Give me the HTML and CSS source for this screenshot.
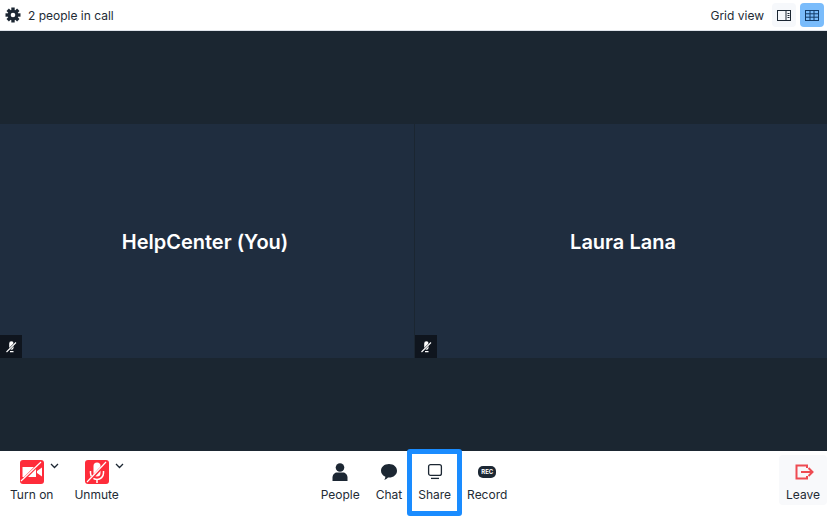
FILE: index.html
```html
<!DOCTYPE html>
<html lang="en">
<head>
  <meta charset="UTF-8">
  <title>Meeting</title>
  <link rel="stylesheet" href="styles.css">
</head>
<body>
<div class="app">
  <header class="topbar">
    <div class="call-info">
      <svg class="gear" width="16" height="16" viewBox="0 0 16 16" fill="#1c2733">
        <rect x="6.300" y=".5" width="3.400" height="15"/>
        <rect x="6.300" y=".5" width="3.400" height="15" transform="rotate(45 8 8)"/>
        <rect x="6.300" y=".5" width="3.400" height="15" transform="rotate(90 8 8)"/>
        <rect x="6.300" y=".5" width="3.400" height="15" transform="rotate(135 8 8)"/>
        <circle cx="8" cy="8" r="5.300"/>
        <circle cx="8" cy="8" r="2.300" fill="#fff"/>
      </svg>
      <span>2 people in call</span>
    </div>
    <div class="view-switch">
      <span class="view-label">Grid view</span>
      <button class="view-btn">
        <svg width="14" height="11" viewBox="0 0 14 11" fill="none" stroke="#1c2733"><rect x=".5" y=".5" width="13" height="10"/><path d="M9 .5v10M10.500 3.500h2M10.500 5.500h2M10.500 7.500h2"/></svg>
      </button>
      <button class="view-btn active">
        <svg width="14" height="11" viewBox="0 0 14 11" fill="none" stroke="#123a66"><rect x=".5" y=".5" width="13" height="10"/><path d="M.5 3.800h13M.5 7.200h13M5 .5v10M9 .5v10"/></svg>
      </button>
    </div>
  </header>

  <main class="stage">
    <div class="grid">
      <section class="tile tile-self">
        <div class="tile-name">HelpCenter (You)</div>
        <div class="muted-badge">
          <svg width="14" height="14" viewBox="0 0 14 14"><path fill="#fff" d="M5.200 3.500a2.200 2.200 0 0 1 4.400 0v4a2.200 2.200 0 0 1-4.400 0zM6 11h3.500v1.200H6z"/><path stroke="#0f151e" stroke-width="2.200" d="M3 11.500L11.500 3"/><path stroke="#fff" stroke-width="1.100" d="M2.500 12L12 2.500"/></svg>
        </div>
      </section>
      <section class="tile tile-other">
        <div class="tile-name">Laura Lana</div>
        <div class="muted-badge">
          <svg width="14" height="14" viewBox="0 0 14 14"><path fill="#fff" d="M5.200 3.500a2.200 2.200 0 0 1 4.400 0v4a2.200 2.200 0 0 1-4.400 0zM6 11h3.500v1.200H6z"/><path stroke="#0f151e" stroke-width="2.200" d="M3 11.500L11.500 3"/><path stroke="#fff" stroke-width="1.100" d="M2.500 12L12 2.500"/></svg>
        </div>
      </section>
    </div>
  </main>

  <footer class="toolbar">
    <div class="tool-group left">
      <div class="tool tool-media">
        <div class="tool-icon">
          <span class="red-box">
            <svg width="24" height="24" viewBox="0 0 24 24"><path fill="#fff" d="M2.500 7h13.500v10H2.500zM17 11l5-3.500v9L17 13z"/><path stroke="#fe2c3a" stroke-width="3" d="M2 21L20 3"/><path stroke="#fff" stroke-width="1.200" d="M1 21L21 2"/></svg>
          </span>
          <svg class="caret" width="9" height="6" viewBox="0 0 9 6" fill="none" stroke="#1c2733" stroke-width="1.300"><path d="M1 1l3.500 3.500L8 1"/></svg>
        </div>
        <span class="tool-label">Turn on</span>
      </div>
      <div class="tool tool-media tool-unmute">
        <div class="tool-icon">
          <span class="red-box">
            <svg width="24" height="24" viewBox="0 0 24 24"><path fill="#fff" d="M8.500 6a3.500 3.500 0 0 1 7 0v7a3.500 3.500 0 0 1-7 0z"/><path fill="none" stroke="#fff" stroke-width="1.500" d="M5.500 11v2a6.500 6.500 0 0 0 13 0v-2M12 19.500V23"/><path stroke="#fe2c3a" stroke-width="3" d="M3 22L21 3"/><path stroke="#fff" stroke-width="1.200" d="M2 22L21 2"/></svg>
          </span>
          <svg class="caret" width="9" height="6" viewBox="0 0 9 6" fill="none" stroke="#1c2733" stroke-width="1.300"><path d="M1 1l3.500 3.500L8 1"/></svg>
        </div>
        <span class="tool-label">Unmute</span>
      </div>
    </div>

    <div class="tool-group center">
      <div class="tool">
        <div class="tool-icon">
          <svg width="16" height="18" viewBox="0 0 16 18"><circle cx="8" cy="4.500" r="4.300" fill="#1c2733"/><path fill="#1c2733" d="M.5 18v-3.500C.5 11.500 3 9.500 5 9.500h6c2 0 4.500 2 4.500 5V18z"/></svg>
        </div>
        <span class="tool-label">People</span>
      </div>
      <div class="tool">
        <div class="tool-icon">
          <svg width="18" height="18" viewBox="0 0 18 18"><path fill="#1c2733" d="M9 1c4.600 0 8 2.900 8 6.800 0 3.900-3.400 6.800-8 6.800l-1-.1c-.9 1.200-2.300 2-3.800 2.300.7-.8 1.100-1.800 1.200-3C2.700 12.700 1 10.500 1 7.800 1 3.900 4.400 1 9 1z"/></svg>
        </div>
        <span class="tool-label">Chat</span>
      </div>
      <div class="tool tool-share">
        <div class="tool-icon">
          <svg width="18" height="18" viewBox="0 0 18 18" fill="none" stroke="#1c2733" stroke-width="1.300"><rect x="2.600" y="1.600" width="12.800" height="10.800" rx="2"/><path d="M5 15.400h8"/></svg>
        </div>
        <span class="tool-label">Share</span>
        <div class="highlight"></div>
      </div>
      <div class="tool">
        <div class="tool-icon">
          <span class="rec-badge">REC</span>
        </div>
        <span class="tool-label">Record</span>
      </div>
    </div>

    <div class="tool-group right">
      <div class="tool tool-leave">
        <div class="tool-icon">
          <svg width="20" height="16" viewBox="0 0 20 16" fill="none" stroke="#ee4b52" stroke-width="2"><path d="M12 4V1.500H1.500v13H12V12"/><path d="M6 8h11.500M13.500 4l4 4-4 4"/></svg>
        </div>
        <span class="tool-label">Leave</span>
      </div>
    </div>
  </footer>
</div>
</body>
</html>
```

FILE: styles.css
```css
html, body {
  margin: 0;
  padding: 0;
  height: 100%;
  background: #fff;
  color: #232b35;
  font-family: Inter, "Liberation Sans", sans-serif;
  overflow: hidden;
}
.app {
  display: flex;
  flex-direction: column;
  height: 516px;
}
.topbar {
  display: flex;
  justify-content: space-between;
  align-items: center;
  height: 30px;
  flex: none;
  padding: 0 3px 0 5px;
  border-bottom: 1px solid #dfe3ea;
  font-size: 12px;
}
.call-info {
  display: flex;
  align-items: center;
  gap: 7px;
}
.view-switch {
  display: flex;
  align-items: center;
  gap: 4px;
}
.view-label {
  margin-right: 4px;
}
.view-btn {
  display: flex;
  align-items: center;
  justify-content: center;
  width: 24px;
  height: 24px;
  padding: 0;
  border: none;
  border-radius: 4px;
  background: #f6f8fb;
}
.view-btn.active {
  background: #7abcfb;
}
.stage {
  flex: 1;
  display: flex;
  align-items: center;
  background: #1b2631;
}
.grid {
  flex: 1;
  display: grid;
  grid-template-columns: 414px 1fr;
  gap: 1px;
  height: 234px;
}
.tile {
  position: relative;
  display: flex;
  align-items: center;
  justify-content: center;
  padding-top: 2px;
  background: #1f2d3f;
}
.tile-self {
  padding-right: 4px;
}
.tile-other {
  padding-left: 4px;
}
.tile-name {
  color: #fff;
  font-size: 20px;
  font-weight: 600;
}
.muted-badge {
  position: absolute;
  left: 0;
  bottom: 0;
  display: flex;
  align-items: center;
  justify-content: center;
  width: 22px;
  height: 23px;
  background: #0f151e;
}
.toolbar {
  display: grid;
  grid-template-columns: 1fr auto 1fr;
  height: 65px;
  flex: none;
  background: #fff;
}
.tool-group {
  display: flex;
}
.tool-group.left {
  padding-left: 7px;
  gap: 15px;
}
.tool-group.center {
  gap: 16px;
  padding-left: 1px;
}
.tool-group.right {
  justify-content: flex-end;
  align-items: flex-start;
}
.tool {
  position: relative;
  display: flex;
  flex-direction: column;
  align-items: center;
  padding-top: 9px;
  font-size: 12px;
}
.tool-media {
  padding-left: 3px;
  padding-right: 3px;
}
.tool-icon {
  position: relative;
  display: flex;
  align-items: center;
  justify-content: center;
  height: 24px;
  margin-bottom: 4px;
}
.tool-label {
  line-height: 14px;
  white-space: nowrap;
}
.red-box {
  display: flex;
  width: 24px;
  height: 24px;
  border-radius: 3px;
  background: #fe2c3a;
}
.caret {
  position: absolute;
  left: calc(50% + 18px);
  top: 3px;
}
.tool-share .highlight {
  position: absolute;
  left: -11px;
  right: -11px;
  top: -2px;
  bottom: 0;
  border: 5px solid #1a8cff;
  border-radius: 3px;
}
.rec-badge {
  display: block;
  width: 18px;
  height: 12px;
  border-radius: 5px;
  background: #1c2733;
  color: #fff;
  font-size: 6px;
  font-weight: 700;
  line-height: 12px;
  text-align: center;
}
.tool-leave {
  box-sizing: border-box;
  width: 48px;
  height: 50px;
  margin-top: 4px;
  padding-top: 5px;
  border-radius: 4px;
  background: #f8f9fb;
}
.tool-leave .tool-icon {
  padding-left: 3px;
}
```
